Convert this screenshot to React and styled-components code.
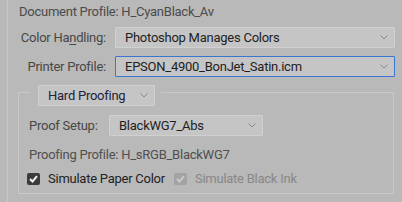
import styled, { createGlobalStyle } from 'styled-components';

const GlobalStyle = createGlobalStyle`
  html, body {
    margin: 0;
    padding: 0;
    background: #b9b9b9;
  }
  body {
    font-family: Roboto, "Liberation Sans", sans-serif;
  }
`;

const Chevron = ({ color = '#8a8a8a' }) => (
  <svg width="8" height="5" viewBox="0 0 8 5">
    <path d="M0.5 0.5 L4 4 L7.5 0.5" fill="none" stroke={color} strokeWidth="1" />
  </svg>
);

const Check = ({ color = '#fff' }) => (
  <svg width="9" height="8" viewBox="0 0 9 8">
    <path d="M1 4 L3.5 6.5 L8 1.2" fill="none" stroke={color} strokeWidth="2" />
  </svg>
);

const Dropdown = ({ value, width, focused, textColor }) => (
  <SelectBox $width={width} $focused={focused}>
    <SelectText $color={textColor}>{value}</SelectText>
    <Chevron />
  </SelectBox>
);

const Checkbox = ({ label, disabled }) => (
  <CheckLabel $disabled={disabled}>
    <CheckSquare $disabled={disabled}>
      <Check color={disabled ? '#c9c9c9' : '#f2f2f2'} />
    </CheckSquare>
    {label}
  </CheckLabel>
);

export default function App() {
  return (
    <>
      <GlobalStyle />
      <Screen>
        <Panel>
          <DocLine>Document Profile: H_CyanBlack_Av</DocLine>
          <FormRow $top={3}>
            <Label>
              Color Ha<u>n</u>dling:
            </Label>
            <Dropdown value="Photoshop Manages Colors" width={280} />
          </FormRow>
          <FormRow $top={8}>
            <Label>Printer Profile:</Label>
            <Dropdown value="EPSON_4900_BonJet_Satin.icm" width={280} focused />
          </FormRow>
          <GroupBox>
            <Legend>
              <Dropdown value="Hard Proofing" width={117} textColor="#22223a" />
            </Legend>
            <GroupRow $top={9}>
              <InnerLabel>Proof Setup:</InnerLabel>
              <Dropdown value="BlackWG7_Abs" width={154} />
            </GroupRow>
            <InfoLine>Proofing Profile: H_sRGB_BlackWG7</InfoLine>
            <ChecksRow>
              <Checkbox label="Simulate Paper Color" />
              <Checkbox label="Simulate Black Ink" disabled />
            </ChecksRow>
          </GroupBox>
        </Panel>
      </Screen>
    </>
  );
}

const Screen = styled.div`
  width: 402px;
  height: 202px;
  overflow: hidden;
  background: #b9b9b9;
  font-size: 13px;
  letter-spacing: -0.25px;
`;

const Panel = styled.div`
  margin-left: 7px;
  height: 100%;
  border-left: 1px solid #c7c7c7;
  display: flex;
  flex-direction: column;
`;

const DocLine = styled.div`
  padding-left: 11px;
  height: 24px;
  line-height: 24px;
  color: #4b4b4b;
  white-space: nowrap;
`;

const FormRow = styled.div`
  display: flex;
  align-items: center;
  margin-top: ${({ $top }) => $top}px;
  gap: 9px;
`;

const Label = styled.div`
  width: 98px;
  text-align: right;
  color: #474747;
  white-space: nowrap;

  u {
    text-decoration-thickness: 1px;
    text-underline-offset: 2px;
  }
`;

const SelectBox = styled.div`
  box-sizing: border-box;
  width: ${({ $width }) => $width}px;
  height: 21px;
  display: flex;
  align-items: center;
  justify-content: space-between;
  padding: 0 6px 0 9px;
  background: #c5c5c5;
  border: 1px solid ${({ $focused }) => ($focused ? '#3a76cf' : '#d0d0d0')};
  border-radius: 1px;
`;

const SelectText = styled.span`
  color: ${({ $color }) => $color || '#1e1e1e'};
  white-space: nowrap;
`;

const GroupBox = styled.div`
  box-sizing: border-box;
  margin: 15px 0 0 10px;
  width: 376px;
  height: 102px;
  border: 1px solid #c9c9c9;
  display: flex;
  flex-direction: column;
`;

const Legend = styled.div`
  align-self: flex-start;
  margin: -8px 0 0 11px;
  padding: 0 6px 0 8px;
  background: #b9b9b9;
`;

const GroupRow = styled.div`
  display: flex;
  align-items: center;
  margin-top: ${({ $top }) => $top}px;
  padding-left: 10px;
`;

const InnerLabel = styled.div`
  width: 80px;
  color: #474747;
  white-space: nowrap;
`;

const InfoLine = styled.div`
  margin-top: 8px;
  padding-left: 10px;
  height: 21px;
  line-height: 21px;
  color: #4f4f4f;
  white-space: nowrap;
`;

const ChecksRow = styled.div`
  display: flex;
  align-items: center;
  gap: 9px;
  margin-top: 6px;
  padding-left: 8px;
`;

const CheckLabel = styled.label`
  display: flex;
  align-items: center;
  gap: 8px;
  color: ${({ $disabled }) => ($disabled ? '#878787' : '#232323')};
  white-space: nowrap;
`;

const CheckSquare = styled.span`
  box-sizing: border-box;
  width: 13px;
  height: 12px;
  border-radius: 2px;
  display: flex;
  align-items: center;
  justify-content: center;
  background: ${({ $disabled }) => ($disabled ? '#a3a3a3' : '#3b3b3b')};
`;
